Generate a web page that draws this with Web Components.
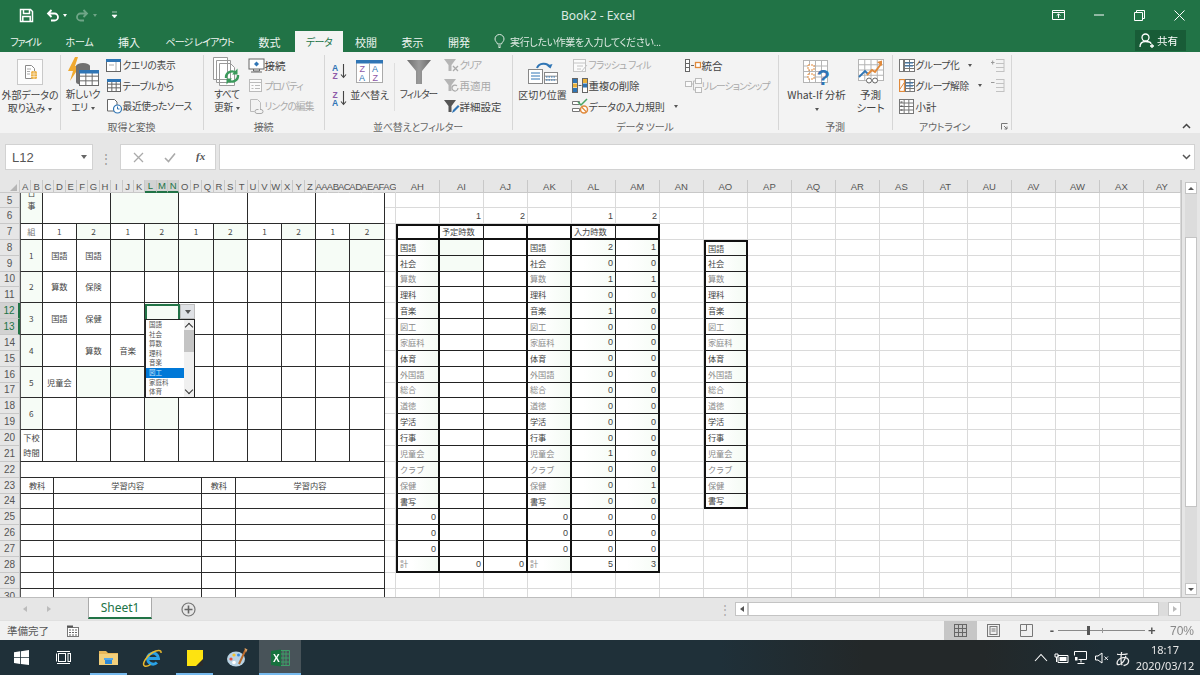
<!DOCTYPE html>
<html lang="ja">
<head>
<meta charset="utf-8">
<title>Book2 - Excel</title>
<style>
  html, body { margin: 0; padding: 0; width: 1200px; height: 675px; overflow: hidden; background: #e6e6e6; }
  body { font-family: "Noto Sans CJK JP", "Noto Sans", sans-serif; font-feature-settings: "palt"; }
  excel-app { filter: blur(.3px); }
</style>
</head>
<body>
<excel-app></excel-app>
<script>
const B = "#2f75b5", O = "#e08a3c", G = "#666";
const grid = (x, y, w, h, cols, rows, c) => {
  let s = `<rect x="${x + .5}" y="${y + .5}" width="${w}" height="${h}" fill="#fff" stroke="${c}"/>`;
  for (let i = 1; i < cols; i++) s += `<path d="M${x + .5 + i * w / cols} ${y}v${h}" stroke="${c}"/>`;
  for (let i = 1; i < rows; i++) s += `<path d="M${x} ${y + .5 + i * h / rows}h${w}" stroke="${c}"/>`;
  return s;
};
const funnel = c => `<path d="M1 1h12L8.5 7v6h-3V7z" fill="${c}"/>`;
const ICONS = {
  save: [15, 15, `<path d="M1.5 1.5h10l2 2v10h-12zM4.5 1.5v4h6v-4M3.8 13.5v-5h7.4v5" fill="none" stroke="#fff" stroke-width="1.5"/>`],
  undo: [15, 13, `<path d="M3 4.5h6.5a3.5 3.5 0 0 1 0 7H6M6.5 1L3 4.5 6.5 8" fill="none" stroke="#fff" stroke-width="1.8"/>`],
  redo: [15, 13, `<path d="M12 4.5H5.5a3.5 3.5 0 0 0 0 7H9M8.5 1L12 4.5 8.5 8" fill="none" stroke="#6fa587" stroke-width="1.8"/>`],
  qat: [7, 8, `<path d="M1 1h5M1 4h5l-2.5 3z" fill="#fff" stroke="#fff" stroke-width=".6"/>`],
  mode: [13, 10, `<path d="M.5.5h12v9H.5z" fill="none" stroke="#fff"/><path d="M.5 2.5h12" stroke="#fff"/><path d="M6.5 8V4M4.7 5.6l1.8-1.8 1.8 1.8" fill="none" stroke="#fff"/>`],
  min: [10, 2, `<path d="M0 1h10" stroke="#fff"/>`],
  restore: [11, 11, `<path d="M.5 2.5h8v8h-8zM2.5 2.5v-2h8v8h-2" fill="none" stroke="#fff"/>`],
  close: [11, 11, `<path d="M.5.5l10 10M10.5.5l-10 10" stroke="#fff"/>`],
  bulb: [11, 14, `<path d="M3.5 10C3 8 1 7.5 1 5a4.5 4.5 0 0 1 9 0c0 2.500-2 3-2.500 5zM4 12h3M4.500 13.500h2" fill="none" stroke="#dfeae3"/>`],
  user: [15, 15, `<circle cx="6.500" cy="4.500" r="3.500" fill="none" stroke="#fff" stroke-width="1.300"/><path d="M1 14c0-4 2-5.500 5.500-5.500S12 9.500 12 11M11 13h4M13 11v4" fill="none" stroke="#fff" stroke-width="1.300"/>`],
  extdata: [26, 26, `<rect x=".5" y=".5" width="25" height="25" fill="#fcfcfc" stroke="#c9c9c9"/><path d="M8.500 6.500h6l3 3v10h-9z" fill="#fff" stroke="#8a8a8a"/><path d="M10 10h4M10 12.500h3M10 15h3" stroke="#aaa"/><rect x="14" y="12" width="6" height="8" rx="1.500" fill="#edb34a"/><path d="M14 15h6M14 17.500h6M17 12v8" stroke="#fff" stroke-width=".5"/>`],
  newquery: [32, 30, `<path d="M8 0L1 14h5L3 24 13 9H8l3-9z" fill="#f0a92e"/><path d="M9 9a7 3 0 0 1 14 0v16a7 3 0 0 1-14 0z" fill="#707070"/>${grid(12, 14, 19, 14, 3, 3, "#6a6a6a")}<rect x="12" y="13" width="20" height="3.500" fill="${B}"/>`],
  showquery: [16, 15, `<rect x=".5" y="1.500" width="14" height="12" fill="#fff" stroke="#666"/><rect x="0" y="1" width="15" height="3" fill="${B}"/><path d="M10 4v9M3 7h5" stroke="#aaa"/>`],
  fromtable: [16, 15, `${grid(1, 2, 13, 11, 3, 3, "#666")}<rect x="1" y="1" width="14" height="3" fill="${B}"/>`],
  recent: [17, 16, `<path d="M1.500 1.500h7l2.500 2.500v9h-9.500z" fill="#fff" stroke="#666"/><circle cx="11.500" cy="11" r="4" fill="#fff" stroke="${B}" stroke-width="1.200"/><path d="M11.500 8.500V11h2" fill="none" stroke="${B}"/>`],
  refresh: [28, 30, `<path d="M.500 .500h14v22h-14zM3.500 3.500h14v22h-14zM6.500 6.500h11l4 4v18h-15z" fill="#fff" stroke="#999"/><path d="M13 21a6 6 0 0 1 10-5M25 18a6 6 0 0 1-10 5" fill="none" stroke="#3a9a5b" stroke-width="2.400"/><path d="M24.500 11.500v6h-5.500zM13.500 27.500v-6h5.500z" fill="#3a9a5b"/>`],
  connect: [17, 15, `<rect x="1" y="1" width="15" height="10" fill="#fff" stroke="#666"/><path d="M8.500 3.500l2.500 2.500-2.500 2.500L6 6z" fill="${B}"/><path d="M5.500 11v2h6v-2M3 14h11" fill="none" stroke="#666"/>`],
  props: [16, 15, `<rect x="1.500" y="1.500" width="12" height="12" fill="#fbfbfb" stroke="#bbb"/><path d="M1.500 4.500h12M3.500 7.500h2M7 7.500h5M3.500 10.500h2M7 10.500h5" stroke="#bbb"/>`],
  links: [16, 15, `<path d="M2.500 .500h7l3 3v7M2.500 .500v12h4" fill="none" stroke="#bbb"/><path d="M7 12.500a2 2 0 0 1 2-2h1.500M11 14.500h-2a2 2 0 0 1-2-2M12 10.500h1a2 2 0 0 1 0 4h-2" fill="none" stroke="#aaa"/>`],
  sortaz: [16, 17, `<text x="0" y="7.500" font-size="8.500" font-weight="700" font-family="Liberation Sans" fill="${B}">A</text><text x="0.500" y="15.500" font-size="8.500" font-weight="700" font-family="Liberation Sans" fill="#8d5aa8">Z</text><path d="M11.500 1v13M9 11.500l2.500 3 2.500-3" fill="none" stroke="#444" stroke-width="1.100"/>`],
  sortza: [16, 17, `<text x="0.500" y="7.500" font-size="8.500" font-weight="700" font-family="Liberation Sans" fill="#8d5aa8">Z</text><text x="0" y="15.500" font-size="8.500" font-weight="700" font-family="Liberation Sans" fill="${B}">A</text><path d="M11.500 1v13M9 11.500l2.500 3 2.500-3" fill="none" stroke="#444" stroke-width="1.100"/>`],
  sortbig: [27, 23, `<rect x=".5" y=".5" width="26" height="22" fill="#fff" stroke="#aaa"/><rect x="0" y="0" width="27" height="3.500" fill="${B}"/><path d="M13.500 3v19" stroke="#aaa"/><text x="3.500" y="12" font-size="9" font-family="Liberation Sans" fill="#8d5aa8">Z</text><text x="16" y="12" font-size="9" font-family="Liberation Sans" fill="${B}">A</text><text x="3" y="21" font-size="9" font-family="Liberation Sans" fill="${B}">A</text><text x="16.500" y="21" font-size="9" font-family="Liberation Sans" fill="#8d5aa8">Z</text>`],
  filter: [24, 24, `<defs><linearGradient id="f" x1="0" x2="1"><stop offset="0" stop-color="#6f6f6f"/><stop offset=".5" stop-color="#9a9a9a"/><stop offset="1" stop-color="#6a6a6a"/></linearGradient></defs><path d="M0 0h24l-9 11v13H9V11z" fill="url(#f)"/>`],
  clear: [17, 15, `${funnel("#b5b5b5")}<path d="M10 8l5 5M15 8l-5 5" stroke="#aaa" stroke-width="1.300"/>`],
  reapply: [17, 15, `${funnel("#b5b5b5")}<path d="M15 10a3 3 0 1 1-1-2.200" fill="none" stroke="#aaa" stroke-width="1.200"/>`],
  advanced: [17, 15, `${funnel("#555")}<path d="M9 14l1-3 5-5 1.500 1.500-5 5z" fill="${B}"/>`],
  textcol: [30, 24, `<path d="M9 8a7 6 0 0 1 13-1" fill="none" stroke="${B}" stroke-width="2"/><path d="M18.500 5.500l4 3 2-4.500z" fill="${B}"/><rect x=".5" y="9.500" width="14" height="14" fill="#fff" stroke="#888"/><path d="M3 13h9M3 16h9M3 19h9" stroke="${B}"/>${grid(16, 12, 13, 11, 1, 3, "#888")}<path d="M18 17h9M18 20h9" stroke="${B}" stroke-dasharray="1.500 1"/>`],
  flash: [16, 15, `<rect x="1.500" y="1.500" width="12" height="12" fill="#fbfbfb" stroke="#c4c4c4"/><path d="M1.500 5h12M5 8h6M5 11h4M9 14l6-7" stroke="#c4c4c4"/>`],
  dup: [16, 15, `<rect x=".5" y=".5" width="5" height="14" fill="#fff" stroke="#666"/><rect x="10.500" y=".5" width="5" height="14" fill="#fff" stroke="#666"/><rect x="1" y="1" width="4" height="4" fill="${B}"/><rect x="1" y="5.500" width="4" height="4" fill="#eab13a"/><rect x="1" y="10" width="4" height="4" fill="${B}"/><rect x="11" y="1" width="4" height="4" fill="#eab13a"/><rect x="11" y="5.500" width="4" height="4" fill="${B}"/><path d="M6.500 7.500h3" stroke="#666"/>`],
  valid: [17, 16, `<path d="M.500 3.500h7v3h-7zM.500 10.500h7v3h-7z" fill="#fff" stroke="#777"/><path d="M6 4l3 3 6-6" fill="none" stroke="#4aa564" stroke-width="1.500"/><circle cx="12" cy="11.500" r="3.500" fill="#fff" stroke="${O}" stroke-width="1.500"/><path d="M9.800 9.300l4.400 4.400" stroke="${O}" stroke-width="1.300"/>`],
  consol: [16, 15, `<rect x=".5" y="1.500" width="4" height="12" fill="#fff" stroke="#666"/><path d="M.5 5.500h4M.5 9.500h4M6 7.500h3" stroke="#666"/><rect x="10.500" y="4.500" width="5" height="5" fill="#fff" stroke="${O}" stroke-width="1.300"/>`],
  relation: [17, 15, `<rect x=".5" y="3.500" width="6" height="5" fill="#fafafa" stroke="#bbb"/><rect x="10.500" y=".5" width="6" height="5" fill="#fafafa" stroke="#bbb"/><rect x="10.500" y="9.500" width="6" height="5" fill="#fafafa" stroke="#bbb"/><path d="M6.500 6h2v-3h2M8.500 6v6h2" fill="none" stroke="#bbb"/>`],
  whatif: [27, 34, `<g transform="translate(0,5)">${grid(0, 0, 24, 22, 4, 4, "#b5b5b5")}<path d="M5 5h6v5H5zM5 14h6v5H5z" fill="#fff" stroke="${O}" stroke-dasharray="2 1"/></g><text x="13.500" y="30" font-size="22" font-weight="700" font-family="Liberation Sans" fill="${B}">?</text>`],
  forecast: [26, 25, `${grid(0, 0, 25, 21, 4, 4, "#b5b5b5")}<path d="M1 18l6-6 3 3" fill="none" stroke="${B}" stroke-width="1.800"/><path d="M9 16l5-5 3 2 6-8" fill="none" stroke="${O}" stroke-width="2"/><path d="M19 3l5-1.500V7z" fill="${O}"/><circle cx="11" cy="21.500" r="2.500" fill="#fff" stroke="#666"/><circle cx="17" cy="21.500" r="2.500" fill="#fff" stroke="#666"/>`],
  group: [16, 13, `<rect x=".5" y=".5" width="4" height="12" fill="#fff" stroke="#777"/>${grid(5, 0, 10, 12, 2, 4, "#777")}<path d="M6 4h8M6 7h8" stroke="${B}"/>`],
  ungroup: [16, 13, `<rect x=".5" y=".5" width="5" height="12" fill="#fff" stroke="${O}" stroke-width="1.300"/><path d="M1 10l4-6" stroke="${O}"/>${grid(6, 0, 9, 12, 2, 4, "#777")}<path d="M7 4h7M7 7h7" stroke="${B}"/>`],
  subtotal: [16, 15, `${grid(0, 0, 14, 14, 3, 4, "#777")}<path d="M1.500 3h2M1.500 7h2M1.500 11h2" stroke="#444"/>`],
  more: [14, 13, `<path d="M0 3.500h3.500M1.700 1.500v4" stroke="#999"/><path d="M5 .5h8M5 4.500h8M5 8.500h8M5 12.500h8M13 0v13" stroke="#c2c2c2"/>`],
  less: [14, 13, `<path d="M0 3.500h3.500" stroke="#999"/><path d="M5 .5h8M5 4.500h8M5 8.500h8M5 12.500h8M13 0v13" stroke="#c2c2c2"/>`],
  launcher: [7, 7, `<path d="M.5 6.500v-6h6M3 3l3 3M6 3.500V6H3.500" fill="none" stroke="#777"/>`],
  collapse: [9, 6, `<path d="M1 5l3.500-3.500L8 5" fill="none" stroke="#444" stroke-width="1.500"/>`],
  chevdown: [9, 6, `<path d="M1 1l3.500 3.500L8 1" fill="none" stroke="#555" stroke-width="1.500"/>`],
  cross: [11, 11, `<path d="M1 1l9 9M10 1l-9 9" stroke="#aaa" stroke-width="1.300"/>`],
  check: [12, 11, `<path d="M1 6l3.500 3.500L11 1.500" fill="none" stroke="#aaa" stroke-width="1.600"/>`],
  fx: [12, 14, `<text x="0" y="10" font-size="11" font-style="italic" font-weight="700" font-family="Liberation Serif" fill="#555">fx</text>`],
  plus: [15, 15, `<circle cx="7.500" cy="7.500" r="6.500" fill="none" stroke="#777" stroke-width="1.200"/><path d="M7.500 3.500v8M3.500 7.500h8" stroke="#666" stroke-width="1.600"/>`],
  macro: [12, 12, `<rect x=".5" y="2.500" width="11" height="9" fill="#fff" stroke="#777"/><path d="M0 1.500h6" stroke="#555" stroke-width="2"/><path d="M2 5h2M5 5h2M8 5h2M2 7.500h2M5 7.500h2M8 7.500h2M2 10h2M5 10h2M8 10h2" stroke="#666"/>`],
  vnormal: [13, 13, `${grid(0, 0, 12, 12, 3, 3, "#666").replace('fill="#fff"', 'fill="none"')}`],
  vpage: [13, 13, `<rect x=".5" y=".5" width="12" height="12" fill="none" stroke="#777"/><rect x="3" y="2.500" width="7" height="8" fill="none" stroke="#777"/><path d="M4.500 5h4M4.500 7h4" stroke="#777"/>`],
  vbreak: [13, 13, `<path d="M.5 3.500v9h12v-12h-12v6h6v-6" fill="none" stroke="#777"/>`],
  windows: [15, 15, `<path d="M0 2.200l6.200-.9v5.900H0zM7 1.200L15 0v7.200H7zM0 8h6.200v5.900L0 13zM7 8h8v7l-8-1.100z" fill="#fff"/>`],
  taskview: [15, 13, `<path d="M1 .5h13M1 12.500h13" stroke="#fff"/><rect x="2.500" y="2.500" width="7" height="8" fill="none" stroke="#fff"/><rect x="12" y="2.500" width="2.500" height="8" fill="none" stroke="#fff"/><rect x="0" y="2.500" width="1" height="8" fill="#fff"/>`],
  folder: [19, 16, `<path d="M0 1h7l2 2h10v12H0z" fill="#e7b75a"/><path d="M0 4h19v11H0z" fill="#f2cf7b"/><rect x="6" y="8" width="7" height="6" fill="#2d89d8"/><path d="M5 8h9v2H5z" fill="#55a8e8"/>`],
  ie: [20, 20, `<path d="M5.500 10.500h11a5.500 5.500 0 1 0-1.600 4" fill="none" stroke="#2aa1e6" stroke-width="3"/><path d="M2.500 18c-3-2 2-10 8-13.500 5-3 9-2.800 8.500.5M2.500 18c2 1 4.500-.500 6-1.500" fill="none" stroke="#e9b92e" stroke-width="1.500"/>`],
  sticky: [16, 16, `<rect width="16" height="16" fill="#fde311"/><path d="M16 9v7H9z" fill="#2b2b2b"/>`],
  paint: [21, 21, `<ellipse cx="9" cy="12" rx="9" ry="7.500" fill="#b9d3e4"/><circle cx="4" cy="12" r="1.600" fill="#e54e3b"/><circle cx="7" cy="8" r="1.600" fill="#f4c430"/><circle cx="11.500" cy="8" r="1.500" fill="#3b8ad9"/><circle cx="7" cy="15.500" r="1.800" fill="#fff"/><path d="M12 17L19 2" stroke="#b96a2c" stroke-width="2"/><path d="M17.500 1l3 1.500-1.500 3z" fill="#d9a066"/>`],
  excel: [19, 18, `<path d="M9 1.500h9.500v15H9" fill="none" stroke="#3f9f68"/><path d="M12 1.500v15M15 1.500v15M9 5h9.500M9 9h9.500M9 13h9.500" stroke="#3f9f68"/><path d="M0 2l10-1.500v17L0 16z" fill="#16723e"/><text x="2" y="13" font-size="10" font-weight="700" font-family="Liberation Sans" fill="#fff">X</text>`],
  tup: [14, 9, `<path d="M1 8l6-6.500L13 8" fill="none" stroke="#fff" stroke-width="1.100"/>`],
  tbatt: [15, 12, `<path d="M4 3.500h10v7H4z" fill="none" stroke="#fff"/><rect x="5.500" y="5" width="7" height="4" fill="#fff"/><path d="M1 2h3v3H1zM2.500 5v5" stroke="#fff" fill="none"/>`],
  tnet: [15, 14, `<path d="M.5.5h12v8h-8" fill="none" stroke="#fff"/><path d="M.5.5v4M7 8.500v3M3.500 12.500h7" stroke="#fff"/><rect x="1" y="6" width="2.500" height="3.500" fill="#fff"/>`],
  tvol: [14, 12, `<path d="M.5 4h2.500L7 1v10L3 8H.5z" fill="none" stroke="#fff"/><path d="M9.500 4.500l3.500 3.500M13 4.500L9.500 8" stroke="#fff" stroke-width=".9"/>`]
};

// 小さい共通部品を登録するヘルパー
const comp = (name, css, html) => customElements.define(name, class extends HTMLElement {
  constructor() {
    super();
    this.attachShadow({ mode: "open" });
  }
  connectedCallback() {
    this.shadowRoot.innerHTML = `<style>${css}</style>${typeof html === "function" ? html(this) : html}`;
  }
});

comp("x-ico", `:host{display:inline-flex;flex:none} svg{display:block}`, el => {
  const [w, h, body] = ICONS[el.getAttribute("n")];
  return `<svg xmlns="http://www.w3.org/2000/svg" width="${w}" height="${h}" viewBox="0 0 ${w} ${h}">${body}</svg>`;
});

comp("x-caret", `:host{display:inline-block;width:0;height:0;border:2.5px solid transparent;border-top:3px solid #555;border-bottom:0;vertical-align:middle;margin-left:3px}`, ``);

comp("title-bar", `
  :host{display:grid;grid-template-columns:1fr auto 1fr;height:30px;background:#217346;align-items:center;color:#e8f1ec}
  .qat{display:flex;align-items:center;padding-left:19px}
  .title{font:12px "Noto Sans","Liberation Sans",sans-serif;padding-right:4px;color:#dce9e2}
  .win{display:flex;justify-content:flex-end;height:100%}
  .win div{width:40.500px;display:flex;align-items:center;justify-content:center}
  x-caret{border-top-color:#fff} .dim{opacity:.35}
`, `
  <div class="qat">
    <x-ico n="save"></x-ico>
    <x-ico n="undo" style="margin-left:11px"></x-ico><x-caret></x-caret>
    <x-ico n="redo" style="margin-left:8px"></x-ico><x-caret class="dim"></x-caret>
    <x-ico n="qat" style="margin-left:14px"></x-ico>
  </div>
  <div class="title">Book2 - Excel</div>
  <div class="win">
    <div><x-ico n="mode"></x-ico></div><div><x-ico n="min"></x-ico></div><div><x-ico n="restore"></x-ico></div><div><x-ico n="close"></x-ico></div>
  </div>`);

comp("ribbon-tab", `
  :host{display:flex;align-items:center;justify-content:center;height:21px;margin-top:1px;font-size:11px;color:#eef5f0;white-space:nowrap}
  :host([active]){background:#f3f3f3;color:#217346}
`, `<slot></slot>`);

comp("tab-row", `
  :host{display:flex;height:22px;background:#217346;position:relative;font-feature-settings:"palt"}
  .help{display:flex;align-items:center;gap:5px;margin-left:12px;font-size:10px;letter-spacing:-.35px;color:#dfeae3}
  .share{margin-left:auto;margin-right:14px;width:51px;height:21px;background:#185c37;color:#fff;display:flex;align-items:center;justify-content:center;gap:3px;font-size:10.500px;box-sizing:border-box;padding-right:4px}
`, `
  <ribbon-tab style="width:51px;font-size:10px;letter-spacing:-1px">ファイル</ribbon-tab>
  <ribbon-tab style="width:57px;font-size:10px;letter-spacing:-.2px">ホーム</ribbon-tab>
  <ribbon-tab style="width:42px">挿入</ribbon-tab>
  <ribbon-tab style="width:99px;font-size:10px;letter-spacing:-.8px">ページ レイアウト</ribbon-tab>
  <ribbon-tab style="width:41px;margin-right:5px">数式</ribbon-tab>
  <ribbon-tab style="width:48px;font-size:10px;letter-spacing:-.5px" active>データ</ribbon-tab>
  <ribbon-tab style="width:46px">校閲</ribbon-tab>
  <ribbon-tab style="width:47px">表示</ribbon-tab>
  <ribbon-tab style="width:46px">開発</ribbon-tab>
  <div class="help"><x-ico n="bulb"></x-ico>実行したい作業を入力してください...</div>
  <div class="share"><x-ico n="user"></x-ico>共有</div>`);

comp("ribbon-group", `
  :host{display:grid;grid-template-columns:1fr 1px;flex:none;box-sizing:border-box;height:81px}
  .main{display:flex;flex-direction:column;min-width:0}
  .body{display:flex;height:68px;padding-top:3px;box-sizing:border-box}
  .label{height:13px;display:flex;align-items:center;font-size:10px;letter-spacing:-.2px;line-height:13px;color:#666;white-space:nowrap}
  .label span{flex:1;text-align:center}
  .sep{background:#d6d6d6;margin:3px 0}
`, el => `
  <div class="main">
    <div class="body" style="padding-left:${el.getAttribute("pad") || 0}px"><slot></slot></div>
    <div class="label"><span style="padding-right:${el.getAttribute("lpad") || 0}px">${el.getAttribute("label") || ""}</span><slot name="extra"></slot></div>
  </div>
  <div class="sep"></div>`);

comp("ribbon-big", `
  :host{display:flex;flex-direction:column;align-items:center;flex:none;font-size:10.500px;line-height:13px;color:#444;text-align:center;white-space:nowrap}
  .ic{height:33px;display:flex;align-items:center;justify-content:center}
`, `<div class="ic"><slot name="icon"></slot></div><div><slot></slot></div>`);

comp("ribbon-small", `
  :host{display:flex;align-items:center;height:20.500px;font-size:10.500px;color:#444;white-space:nowrap}
  :host([off]){color:#a9a9a9}
  :host([k]){font-size:9.700px;letter-spacing:-.3px}
  .ic{width:17px;flex:none;display:flex;align-items:center}
`, `<div class="ic"><slot name="icon"></slot></div><slot></slot>`);

comp("ribbon-col", `:host{display:flex;flex-direction:column;flex:none}`, `<slot></slot>`);

comp("ribbon-bar", `
  :host{display:flex;height:81px;background:#f3f3f3;position:relative;border-bottom:0}
  .vline{width:1px;background:#dedede;margin:8px 3px 12px 2px;flex:none;height:48px}
  .arrow{position:absolute;left:1182px;top:71px}
`, `
  <ribbon-group style="width:60.500px">
    <ribbon-big style="width:60px;font-size:10px;letter-spacing:-.1px">
      <x-ico slot="icon" n="extdata"></x-ico>
      外部データの<br>取り込み<x-caret></x-caret>
    </ribbon-big>
  </ribbon-group>
  <ribbon-group style="width:143px" label="取得と変換">
    <ribbon-big style="width:45px;font-size:9.700px;letter-spacing:-.3px"><x-ico slot="icon" n="newquery"></x-ico>新しいク<br>エリ<x-caret></x-caret></ribbon-big>
    <ribbon-col>
      <ribbon-small k><x-ico slot="icon" n="showquery"></x-ico>クエリの表示</ribbon-small>
      <ribbon-small k><x-ico slot="icon" n="fromtable"></x-ico>テーブルから</ribbon-small>
      <ribbon-small k><x-ico slot="icon" n="recent"></x-ico>最近使ったソース</ribbon-small>
    </ribbon-col>
  </ribbon-group>
  <ribbon-group style="width:121px" label="接続" pad="3">
    <ribbon-big style="width:41px;font-size:9.700px;letter-spacing:-.3px"><x-ico slot="icon" n="refresh"></x-ico>すべて<br>更新<x-caret></x-caret></ribbon-big>
    <ribbon-col>
      <ribbon-small><x-ico slot="icon" n="connect"></x-ico>接続</ribbon-small>
      <ribbon-small off k style="letter-spacing:-1px"><x-ico slot="icon" n="props"></x-ico>プロパティ</ribbon-small>
      <ribbon-small off k style="letter-spacing:-.8px"><x-ico slot="icon" n="links"></x-ico>リンクの編集</ribbon-small>
    </ribbon-col>
  </ribbon-group>
  <ribbon-group style="width:188px" label="並べ替えとフィルター" pad="7">
    <ribbon-col style="width:16px;gap:10px;padding-top:8px">
      <x-ico n="sortaz"></x-ico>
      <x-ico n="sortza"></x-ico>
    </ribbon-col>
    <ribbon-big style="width:44px;font-size:10px;letter-spacing:-.2px"><x-ico slot="icon" n="sortbig"></x-ico>並べ替え</ribbon-big>
    <div class="vline"></div>
    <ribbon-big style="width:42px;font-size:9.700px;letter-spacing:-1px"><x-ico slot="icon" n="filter"></x-ico>フィルター</ribbon-big>
    <ribbon-col style="margin-left:3px">
      <ribbon-small off k style="letter-spacing:-1.500px"><x-ico slot="icon" n="clear"></x-ico>クリア</ribbon-small>
      <ribbon-small off><x-ico slot="icon" n="reapply"></x-ico>再適用</ribbon-small>
      <ribbon-small><x-ico slot="icon" n="advanced"></x-ico>詳細設定</ribbon-small>
    </ribbon-col>
  </ribbon-group>
  <ribbon-group style="width:266px" label="データ ツール" pad="4">
    <ribbon-big style="width:52px;font-size:10px"><x-ico slot="icon" n="textcol"></x-ico>区切り位置</ribbon-big>
    <ribbon-col style="width:113px;margin-left:3px">
      <ribbon-small off k style="letter-spacing:-.6px"><x-ico slot="icon" n="flash"></x-ico>フラッシュ フィル</ribbon-small>
      <ribbon-small style="letter-spacing:-.3px"><x-ico slot="icon" n="dup"></x-ico>重複の削除</ribbon-small>
      <ribbon-small style="font-size:10px;letter-spacing:-.2px"><x-ico slot="icon" n="valid"></x-ico>データの入力規則<x-caret style="margin-left:9px"></x-caret></ribbon-small>
    </ribbon-col>
    <ribbon-col>
      <ribbon-small><x-ico slot="icon" n="consol"></x-ico>統合</ribbon-small>
      <ribbon-small off k style="letter-spacing:-.9px"><x-ico slot="icon" n="relation"></x-ico>リレーションシップ</ribbon-small>
    </ribbon-col>
  </ribbon-group>
  <ribbon-group style="width:114px" label="予測" pad="2">
    <ribbon-big style="width:72px"><x-ico slot="icon" n="whatif"></x-ico>What-If 分析<br><x-caret style="margin:0"></x-caret></ribbon-big>
    <ribbon-big style="width:36px"><x-ico slot="icon" n="forecast"></x-ico>予測<br>シート</ribbon-big>
  </ribbon-group>
  <ribbon-group style="width:119px" label="アウトライン" pad="6" lpad="4">
    <ribbon-col style="width:92px">
      <ribbon-small k><x-ico slot="icon" n="group"></x-ico>グループ化<x-caret style="margin-left:9px"></x-caret></ribbon-small>
      <ribbon-small k><x-ico slot="icon" n="ungroup"></x-ico>グループ解除<x-caret style="margin-left:9px"></x-caret></ribbon-small>
      <ribbon-small><x-ico slot="icon" n="subtotal"></x-ico>小計</ribbon-small>
    </ribbon-col>
    <ribbon-col style="gap:7px;padding-top:4px">
      <x-ico n="more"></x-ico>
      <x-ico n="less"></x-ico>
    </ribbon-col>
    <x-ico slot="extra" n="launcher" style="margin-right:3px"></x-ico>
  </ribbon-group>
  <x-ico class="arrow" n="collapse"></x-ico>`);

comp("formula-bar", `
  :host{display:flex;height:47px;background:#e6e6e6;box-sizing:border-box;padding:11px 5px 10px;align-items:stretch;border-top:0}
  .box{background:#fff;border:1px solid #d2d2d2;box-sizing:border-box;display:flex;align-items:center}
  .name{width:88px;justify-content:space-between;padding:0 5px 0 6px;font:13px "Liberation Sans",sans-serif;color:#555}
  .dots{width:27px;display:flex;align-items:center;justify-content:center;color:#999;font-size:12px;letter-spacing:1px}
  .fn{width:96px;margin-right:3px;padding-left:12px;gap:20px}
  .input{flex:1;justify-content:flex-end;padding-right:3px}
`, `
  <div class="box name">L12<x-caret style="border-top-color:#666;border-width:4px 3.500px 0"></x-caret></div>
  <div class="dots">⋮</div>
  <div class="box fn"><x-ico n="cross"></x-ico><x-ico n="check"></x-ico><x-ico n="fx"></x-ico></div>
  <div class="box input"><x-ico n="chevdown"></x-ico></div>`);

// シート本体: 行列の定義からセルを組み立てる
const W_NARROW = 11.4, W_WIDE = 44, ROW_H = 15.87;
const colName = i => i <= 26 ? String.fromCharCode(64 + i) : "A" + String.fromCharCode(38 + i);
const SUBJECTS = ["国語","社会","算数","理科","音楽","図工","家庭科","体育","外国語","総合","道徳","学活","行事","児童会","クラブ","保健","書写"];
const LIGHT = new Set(["図工","家庭科","外国語","総合","児童会","クラブ","保健","算数","道徳"]);
const TALLY = [[2,1],[0,0],[1,1],[0,0],[1,0],[0,0],[0,0],[0,0],[0,0],[0,0],[0,0],[0,0],[0,0],[1,0],[0,0],[0,1],[0,0]];

class SheetView extends HTMLElement {
  constructor() {
    super();
    this.attachShadow({ mode: "open" });
  }
  connectedCallback() {
    this.cells = "";
    this.used = new Set();
    this.headers();
    this.leftTable();
    this.rightTables();
    this.gridlines();
    this.render();
  }
  add(c1, c2, r1, r2, cls, text = "") {
    for (let c = c1; c <= c2; c++) for (let r = r1; r <= r2; r++) this.used.add(c + ":" + r);
    this.cells += `<div class="${cls}" style="grid-column:${c1 + 1}/${c2 + 2};grid-row:${r1 - 3}/${r2 - 2}">${text}</div>`;
  }
  headers() {
    for (let c = 1; c <= 51; c++) {
      const sel = c >= 12 && c <= 14 ? " sel" : "", tight = c >= 27 && c <= 33 ? " tight" : "";
      this.cells += `<div class="ch${sel}${tight}" style="grid-column:${c + 1};grid-row:1">${colName(c)}</div>`;
    }
    for (let r = 5; r <= 30; r++) {
      const sel = r === 12 || r === 13 ? " sel" : "";
      this.cells += `<div class="rh${sel}" style="grid-row:${r - 3}">${r}</div>`;
    }
  }
  leftTable() {
    const pairs = [];
    for (let c = 3; c < 33; c += 3) pairs.push(c);
    const tintRows = { 8: [9,12,15,18,27,30], 16: [6,9], 18: [12], 12: [12] };
    [[1,2,"a t"],[3,8,"b"],[9,14,"b t"],[15,20,"b"],[21,26,"b"],[27,32,"b"]].forEach(([a, z, cls], i) =>
      this.add(a, z, 5, 6, cls, i === 0 ? `<span class="clip">日<br>事</span>` : ""));
    this.add(1, 2, 7, 7, "a lt", "組");
    pairs.forEach((c, i) => this.add(c, c + 2, 7, 7, "b" + (i % 2 ? " t" : ""), i % 2 ? "2" : "1"));
    const rows = { 8: ["1","国語","国語"], 10: ["2","算数","保険"], 12: ["3","国語","保健"], 14: ["4","","算数","音楽"], 16: ["5","児童会"], 18: ["6"] };
    for (const r of [8, 10, 12, 14, 16, 18]) {
      const vals = rows[r];
      this.add(1, 2, r, r + 1, "a t", vals[0]);
      pairs.forEach((c, i) => this.add(c, c + 2, r, r + 1, "b" + ((tintRows[r] || []).includes(c) ? " t" : ""), vals[i + 1] || ""));
    }
    this.add(1, 2, 20, 21, "a", "下校<br>時間");
    pairs.forEach(c => this.add(c, c + 2, 20, 21, "b"));
    this.add(1, 32, 22, 22, "a");
    for (let r = 23; r <= 30; r++) {
      const head = r === 23;
      this.add(1, 3, r, r, "a", head ? "教科" : "");
      this.add(4, 16, r, r, "b", head ? "学習内容" : "");
      this.add(17, 19, r, r, "b", head ? "教科" : "");
      this.add(20, 32, r, r, "b", head ? "学習内容" : "");
    }
  }
  rightTables() {
    const AH = 34, AI = 35, AJ = 36, AK = 37, AL = 38, AM = 39, AO = 41;
    this.add(AI, AI, 6, 6, "g r", "1");
    this.add(AJ, AJ, 6, 6, "g r", "2");
    this.add(AL, AL, 6, 6, "g r", "1");
    this.add(AM, AM, 6, 6, "g r", "2");
    [[AH,"hd tl",""],[AI,"hd",`<span class="l">予定時数</span>`],[AJ,"hd tk",""],[AK,"hd tk",""],[AL,"hd",`<span class="l">入力時数</span>`],[AM,"hd tk",""]]
      .forEach(([c, cls, t]) => this.add(c, c, 7, 7, "cell l " + cls, t));
    const label = (c, r, extra) => {
      const s = SUBJECTS[r - 8];
      this.add(c, c, r, r, `cell l lab tk ${LIGHT.has(s) ? "soft " : ""}${extra}`, s);
    };
    for (let r = 8; r <= 24; r++) {
      label(AH, r, "lft");
      this.add(AI, AI, r, r, "cell" + (r < 10 ? " t" : ""));
      this.add(AJ, AJ, r, r, "cell tk");
      label(AK, r, "");
      this.add(AL, AL, r, r, "cell r t2", TALLY[r - 8][0]);
      this.add(AM, AM, r, r, "cell r tk t2", TALLY[r - 8][1]);
      label(AO, r, "lft" + (r === 8 ? " top" : "") + (r === 24 ? " bot" : ""));
    }
    for (let r = 25; r <= 27; r++) {
      this.add(AH, AH, r, r, "cell r tk lft", "0");
      this.add(AI, AI, r, r, "cell");
      this.add(AJ, AJ, r, r, "cell tk");
      this.add(AK, AK, r, r, "cell r tk", "0");
      this.add(AL, AL, r, r, "cell r", "0");
      this.add(AM, AM, r, r, "cell r tk", "0");
    }
    this.add(AH, AH, 28, 28, "cell l lab soft tk lft bot", "計");
    this.add(AI, AI, 28, 28, "cell r bot", "0");
    this.add(AJ, AJ, 28, 28, "cell r tk bot", "0");
    this.add(AK, AK, 28, 28, "cell l lab soft tk bot", "計");
    this.add(AL, AL, 28, 28, "cell r bot", "5");
    this.add(AM, AM, 28, 28, "cell r tk bot t2", "3");
  }
  gridlines() {
    for (let r = 5; r <= 30; r++) for (let c = 33; c <= 51; c++)
      if (!this.used.has(c + ":" + r)) this.add(c, c, r, r, "g");
  }
  render() {
    const items = ["国語","社会","算数","理科","音楽","図工","家庭科","体育"];
    this.shadowRoot.innerHTML = `
      <style>
        :host{display:block;position:relative;flex:none;width:1181px;height:417px;overflow:hidden;background:#fff;font-feature-settings:normal}
        .sheet{display:grid;grid-template-columns:20px repeat(33,${W_NARROW}px) repeat(17,${W_WIDE}px) 37px;
          grid-template-rows:13px 15.100px repeat(25,${ROW_H}px);font-size:8.200px;color:#444;border-right:0;width:1181px}
        .sheet > div{box-sizing:border-box;display:flex;align-items:center;justify-content:center;overflow:hidden;white-space:nowrap;line-height:15px}
        .corner{grid-column:1;grid-row:1;background:#e6e6e6;border-right:1px solid #c8c8c8;border-bottom:1px solid #c8c8c8}
        .corner i{display:block;width:0;height:0;border-style:solid;border-width:0 0 7px 7px;border-color:transparent transparent #b5b5b5;margin:3px 0 0 7px}
        .sheet > .ch,.sheet > .rh{background:#e6e6e6;color:#555;font:9.500px "Liberation Sans",sans-serif;border-color:#c8c8c8;border-style:solid;overflow:visible}
        .sheet > .ch{border-width:0 1px 1px 0}
        .sheet > .rh{grid-column:1;border-width:0 1px 1px 0;font-size:10px;padding-left:0}
        .sheet > .ch.tight{font-size:9.500px;letter-spacing:-.4px;border-right-color:transparent}
        .sheet > .ch.sel{background:#d2d2d2;color:#217346;border-bottom:2px solid #217346}
        .sheet > .rh.sel{background:#d2d2d2;color:#217346;border-right:2px solid #217346}
        .sheet > .a,.sheet > .b{border-right:1px solid #2b2b2b;border-bottom:1px solid #2b2b2b;flex-wrap:wrap;white-space:normal;text-align:center}
        .sheet > .a{border-left:1px solid #555}
        .t{background:#f6fcf6}
        .lt{color:#777}
        .clip{display:block;line-height:13px;transform:translateY(-9px);font-size:8px}
        .sheet > .g{border-right:1px solid #dadada;border-bottom:1px solid #dadada}
        .sheet > .cell{border-right:1px solid #222;border-bottom:1px solid #222}
        .sheet > .l{justify-content:flex-start;padding-left:2px}
        .sheet > .r{justify-content:flex-end;padding-right:2px;font:9px "Liberation Sans",sans-serif}
        .sheet > .tk{border-right:2px solid #111}
        .sheet > .hd{border-top:2px solid #111;border-bottom:2px solid #111;border-right:1px solid #222}
        .sheet > .hd.tk{border-right:2px solid #111}
        .sheet > .hd.tl{border-left:2px solid #111;border-right:2px solid #111}
        .sheet > .lft{border-left:2px solid #111}
        .sheet > .top{border-top:2px solid #111}
        .sheet > .bot{border-bottom:2px solid #111}
        .lab{background:linear-gradient(90deg,#fff 35%,#f4fbf4)}
        .soft{color:#8a8a8a}
        .t2{background:linear-gradient(90deg,#fff 25%,#f6fcf6)}
        .selbox{position:absolute;left:145px;top:124px;width:35px;height:31px;box-sizing:border-box;border:2px solid #217346;pointer-events:none}
        .dropbtn{position:absolute;left:180px;top:124px;width:15px;height:15px;box-sizing:border-box;background:#dfe1e5;border:1px solid #bdbdbd;display:flex;align-items:center;justify-content:center}
        .dropbtn i{width:0;height:0;border:3.500px solid transparent;border-top:4px solid #555;border-bottom:0}
        .list{position:absolute;left:145px;top:139px;width:50px;height:79px;box-sizing:border-box;background:#fff;border:1.500px solid #222;display:grid;grid-template-columns:1fr 10px;overflow:hidden}
        .opts{font-size:6.500px;line-height:9.600px;color:#555;padding-top:0}
        .opts div{padding-left:3px;height:9.600px}
        .opts .on{background:#0078d7;color:#cfe6fa}
        .bar{background:#f0f0f0;display:flex;flex-direction:column;align-items:center;justify-content:space-between;position:relative}
        .bar i{display:block;width:5px;height:5px;border:solid #333;border-width:1.500px 0 0 1.500px;transform:rotate(45deg);margin-top:4px}
        .bar i.dn{transform:rotate(225deg);margin:0 0 4px}
        .thumb{position:absolute;left:0;top:10px;width:10px;height:22px;background:#c4c4c4}
      </style>
      <div class="sheet"><div class="corner"><i></i></div>${this.cells}</div>
      <div class="selbox"></div>
      <div class="dropbtn"><i></i></div>
      <div class="list">
        <div class="opts">${items.map(t => `<div class="${t === "図工" ? "on" : ""}">${t}</div>`).join("")}</div>
        <div class="bar"><i></i><span class="thumb"></span><i class="dn"></i></div>
      </div>`;
  }
}
customElements.define("sheet-view", SheetView);

comp("v-scroll", `
  :host{display:flex;flex-direction:column;flex:1;background:#e6e6e6;padding:2px 3px 2px 3px;box-sizing:border-box;border-left:1px solid #c4c4c4}
  .btn{height:12px;flex:none;background:#fff;border:1px solid #c4c4c4;box-sizing:border-box;display:flex;align-items:center;justify-content:center}
  .btn i{width:0;height:0;border:3.500px solid transparent}
  .up i{border-bottom:3.500px solid #555;border-top:0}
  .dn i{border-top:3.500px solid #555;border-bottom:0}
  .gap{background:#dcdcdc;flex:none}
  .thumb{height:270px;flex:none;background:#fff;border:1px solid #c4c4c4;box-sizing:border-box}
`, `
  <div class="btn up"><i></i></div>
  <div class="gap" style="height:43px"></div>
  <div class="thumb"></div>
  <div class="gap" style="flex:1"></div>
  <div class="btn dn"><i></i></div>`);

comp("sheet-tabs", `
  :host{display:flex;align-items:flex-start;height:23px;background:#e6e6e6;box-sizing:border-box;border-top:1px solid #bdbdbd;position:relative}
  .nav{display:flex;gap:20px;align-items:center;width:88px;height:21px;box-sizing:border-box;padding-left:23px}
  .nav i{width:0;height:0;border:3.500px solid transparent}
  .prev{border-right:4px solid #bbb!important;border-left:0!important}
  .next{border-left:4px solid #bbb!important;border-right:0!important}
  .tab{width:64px;height:22px;margin-top:-1px;box-sizing:border-box;background:#fff;border:1px solid #aaa;border-width:1px 1px 0;border-bottom:2px solid #217346;color:#217346;font:12px "Noto Sans","Liberation Sans",sans-serif;display:flex;align-items:center;justify-content:center}
  .add{margin:4px 0 0 29px}
  .dots{position:absolute;left:719px;top:2px;color:#aaa;font-size:12px;line-height:18px}
  .h{position:absolute;left:735px;top:4px;width:446px;height:14px;background:#dcdcdc;display:flex}
  .sq{width:13px;height:14px;box-sizing:border-box;background:#fff;border:1px solid #c4c4c4;display:flex;align-items:center;justify-content:center;flex:none}
  .sq i{width:0;height:0;border:3.500px solid transparent}
  .thumb{width:411px;height:14px;box-sizing:border-box;background:#fff;border:1px solid #c4c4c4;flex:none}
`, `
  <div class="nav"><i class="prev"></i><i class="next"></i></div>
  <div class="tab">Sheet1</div>
  <x-ico class="add" n="plus"></x-ico>
  <div class="dots">⋮</div>
  <div class="h">
    <div class="sq"><i class="prev" style="border-right-color:#555!important"></i></div>
    <div class="thumb"></div>
    <div style="flex:1"></div>
    <div class="sq"><i class="next"></i></div>
  </div>`);

comp("status-bar", `
  :host{display:flex;align-items:center;height:20px;background:#f1f1f1;font-size:10.500px;color:#555;border-top:1px solid #e0e0e0;box-sizing:border-box}
  .left{display:flex;align-items:center;padding-left:7px;gap:18px}
  .views{display:flex;margin-left:auto;height:100%}
  .views div{width:33px;display:flex;align-items:center;justify-content:center}
  .views .on{background:#c6c6c6}
  .zoom{display:flex;align-items:center;width:157px;height:100%;font:12px "Liberation Sans",sans-serif;position:relative;padding-left:6px;box-sizing:border-box;gap:3px}
  .track{width:87px;height:1px;background:#8a8a8a;position:relative}
  .track b{position:absolute;left:29px;top:-4px;width:3px;height:9px;background:#555}
  .track u{position:absolute;left:44px;top:-2px;width:1px;height:5px;background:#999}
  .pct{color:#888;margin-left:13px;font-size:12px}
  .sign{color:#555;font-size:13px;font-weight:700;width:6px;text-align:center}
`, `
  <div class="left">準備完了<x-ico n="macro"></x-ico></div>
  <div class="views">
    <div class="on"><x-ico n="vnormal"></x-ico></div><div><x-ico n="vpage"></x-ico></div><div><x-ico n="vbreak"></x-ico></div>
  </div>
  <div class="zoom">
    <span class="sign">-</span><div class="track"><u></u><b></b></div><span class="sign">+</span><span class="pct">70%</span>
  </div>`);

comp("task-btn", `
  :host{display:flex;align-items:center;justify-content:center;width:43px;height:35px;box-sizing:border-box;position:relative;flex:none}
  :host([active]){background:#485359}
  u{position:absolute;left:3px;right:3px;bottom:0;height:2px;background:#76b9ed;display:none}
  :host([running]) u,:host([active]) u{display:block}
  :host([active]) u{left:0;right:0}
`, `<slot></slot><u></u>`);

comp("task-bar", `
  :host{display:flex;align-items:center;height:35px;background:linear-gradient(90deg,#1f3039 0,#1f3039 60%,#232829 72%,#232829 82%,#1d2d35 92%);color:#eee;position:relative}
  .tray{margin-left:auto;display:flex;align-items:center;height:100%}
  .tray div{width:20.500px;display:flex;align-items:center;justify-content:center}
  .ime{font-size:16px;color:#eee}
  .clock{width:60px!important;flex-direction:column;font:11px/16px "Noto Sans","Liberation Sans",sans-serif;color:#e6e6e6;margin-left:2px;margin-right:5px}
`, `
  <task-btn style="width:42px"><x-ico n="windows"></x-ico></task-btn>
  <task-btn style="width:42px;margin-right:3px"><x-ico n="taskview"></x-ico></task-btn>
  <task-btn running><x-ico n="folder"></x-ico></task-btn>
  <task-btn><x-ico n="ie"></x-ico></task-btn>
  <task-btn running><x-ico n="sticky"></x-ico></task-btn>
  <task-btn><x-ico n="paint"></x-ico></task-btn>
  <task-btn active style="width:42px"><x-ico n="excel"></x-ico></task-btn>
  <div class="tray">
    <div><x-ico n="tup"></x-ico></div>
    <div><x-ico n="tbatt"></x-ico></div>
    <div><x-ico n="tnet"></x-ico></div>
    <div><x-ico n="tvol"></x-ico></div>
    <div class="ime">あ</div>
    <div class="clock"><span>18:17</span><span>2020/03/12</span></div>
  </div>`);

comp("excel-app", `
  :host{display:flex;flex-direction:column;width:1200px;height:675px;overflow:hidden}
  .work{display:flex;height:417px}
`, `
  <title-bar></title-bar>
  <tab-row></tab-row>
  <ribbon-bar></ribbon-bar>
  <formula-bar></formula-bar>
  <div class="work"><sheet-view></sheet-view><v-scroll></v-scroll></div>
  <sheet-tabs></sheet-tabs>
  <status-bar></status-bar>
  <task-bar></task-bar>`);
</script>
</body>
</html>
